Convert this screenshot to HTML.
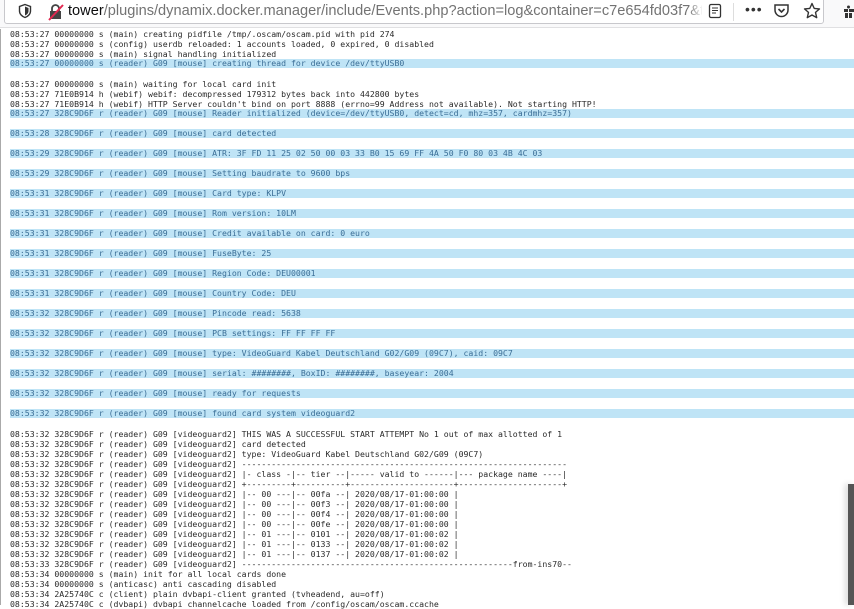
<!DOCTYPE html>
<html><head><meta charset="utf-8"><style>
*{margin:0;padding:0;box-sizing:border-box}
body{width:854px;height:605px;overflow:hidden;background:#fff;position:relative;font-family:"Liberation Sans",sans-serif}
#tb{position:absolute;left:0;top:0;width:854px;height:28px;background:#f9f9fa;border-bottom:1px solid #e0e0e2}
#url{position:absolute;left:4px;top:-1px;width:820px;height:25px;background:#fff;border:1px solid #c8c8cc;border-radius:0 0 3px 3px}
#ut{position:absolute;left:63px;top:3px;width:634px;overflow:hidden;font-size:14.6px;color:#737373;white-space:nowrap}
#ut b{font-weight:normal;color:#0c0c0d}
#log{position:absolute;left:10px;top:29px;right:0;font-family:"DejaVu Sans Mono","Liberation Mono",monospace;font-size:8.2px;line-height:10px;color:#2a2a2a;white-space:pre}
#log div{height:10px}
#log .h{background:#bfe4f6;color:#3b6e96;height:9px;line-height:9px;margin-bottom:1px}
#lb{position:absolute;left:0;top:29px;width:1px;height:576px;background:#aaa}
</style></head><body>
<div id="tb">
 <div id="url">
  <svg style="position:absolute;left:12px;top:3px" width="16" height="16" viewBox="0 0 16 16"><path d="M8 1.5 L13.5 3.5 V8 C13.5 11 11 13.5 8 14.5 C5 13.5 2.5 11 2.5 8 V3.5 Z" fill="none" stroke="#333" stroke-width="1.4"/><path d="M8 3.5 L11.5 5 V8 C11.5 10 10 11.8 8 12.5 Z" fill="#333"/></svg>
  <svg style="position:absolute;left:42px;top:3px" width="18" height="18" viewBox="0 0 18 18"><rect x="3" y="8" width="11" height="8" fill="#444"/><path d="M5 8 V5.5 A3.5 3.5 0 0 1 12 5.5 V8" fill="none" stroke="#444" stroke-width="1.8"/><path d="M2 17 L16 2" stroke="#e22850" stroke-width="2"/></svg>
  <div id="ut"><b>tower</b>/plugins/dynamix.docker.manager/include/Events.php?action=log&amp;container=c7e654fd03f7&amp;title=</div>
  <div style="position:absolute;left:684px;top:0;width:14px;height:22px;background:linear-gradient(90deg,rgba(255,255,255,0),#fff)"></div>
  <svg style="position:absolute;left:703px;top:3px" width="14" height="16" viewBox="0 0 14 16"><rect x="1.5" y="1.5" width="11" height="13" rx="1.5" fill="none" stroke="#333" stroke-width="1.3"/><path d="M4 5h6M4 7.5h6M4 10h4" stroke="#333" stroke-width="1.1"/></svg>
  <div style="position:absolute;left:728px;top:3px;width:1px;height:18px;background:#ddd"></div>
  <div style="position:absolute;left:740px;top:1px;font-size:14px;color:#333;letter-spacing:1px">•••</div>
  <svg style="position:absolute;left:768px;top:3px" width="17" height="16" viewBox="0 0 17 16"><path d="M2 2 H15 V7 A6.5 6.5 0 0 1 2 7 Z" fill="none" stroke="#333" stroke-width="1.5"/><path d="M5.5 6 L8.5 9 L11.5 6" fill="none" stroke="#333" stroke-width="1.6"/></svg>
  <svg style="position:absolute;left:798px;top:2px" width="18" height="18" viewBox="0 0 18 18"><path d="M9 1.5 L11.2 6.4 L16.5 6.9 L12.5 10.4 L13.7 15.7 L9 13 L4.3 15.7 L5.5 10.4 L1.5 6.9 L6.8 6.4 Z" fill="none" stroke="#333" stroke-width="1.4" stroke-linejoin="round"/></svg>
 </div>
 <svg style="position:absolute;left:843px;top:5px" width="11" height="14" viewBox="0 0 11 14"><rect x="1" y="4" width="10" height="3" fill="#333"/><rect x="2" y="8" width="3" height="5" fill="#333"/><rect x="6" y="8" width="3" height="5" fill="#333"/><rect x="5" y="3" width="1" height="10" fill="#fff"/><circle cx="5.5" cy="2" r="1.5" fill="#333"/></svg>
</div>
<div id="lb"></div>
<div id="log"><div>08:53:27 00000000 s (main) creating pidfile /tmp/.oscam/oscam.pid with pid 274</div><div>08:53:27 00000000 s (config) userdb reloaded: 1 accounts loaded, 0 expired, 0 disabled</div><div>08:53:27 00000000 s (main) signal handling initialized</div><div class="h">08:53:27 00000000 s (reader) G09 [mouse] creating thread for device /dev/ttyUSB0</div><div></div><div>08:53:27 00000000 s (main) waiting for local card init</div><div>08:53:27 71E0B914 h (webif) webif: decompressed 179312 bytes back into 442800 bytes</div><div>08:53:27 71E0B914 h (webif) HTTP Server couldn't bind on port 8888 (errno=99 Address not available). Not starting HTTP!</div><div class="h">08:53:27 328C9D6F r (reader) G09 [mouse] Reader initialized (device=/dev/ttyUSB0, detect=cd, mhz=357, cardmhz=357)</div><div></div><div class="h">08:53:28 328C9D6F r (reader) G09 [mouse] card detected</div><div></div><div class="h">08:53:29 328C9D6F r (reader) G09 [mouse] ATR: 3F FD 11 25 02 50 00 03 33 B0 15 69 FF 4A 50 F0 80 03 4B 4C 03</div><div></div><div class="h">08:53:29 328C9D6F r (reader) G09 [mouse] Setting baudrate to 9600 bps</div><div></div><div class="h">08:53:31 328C9D6F r (reader) G09 [mouse] Card type: KLPV</div><div></div><div class="h">08:53:31 328C9D6F r (reader) G09 [mouse] Rom version: 10LM</div><div></div><div class="h">08:53:31 328C9D6F r (reader) G09 [mouse] Credit available on card: 0 euro</div><div></div><div class="h">08:53:31 328C9D6F r (reader) G09 [mouse] FuseByte: 25</div><div></div><div class="h">08:53:31 328C9D6F r (reader) G09 [mouse] Region Code: DEU00001</div><div></div><div class="h">08:53:31 328C9D6F r (reader) G09 [mouse] Country Code: DEU</div><div></div><div class="h">08:53:32 328C9D6F r (reader) G09 [mouse] Pincode read: 5638</div><div></div><div class="h">08:53:32 328C9D6F r (reader) G09 [mouse] PCB settings: FF FF FF FF</div><div></div><div class="h">08:53:32 328C9D6F r (reader) G09 [mouse] type: VideoGuard Kabel Deutschland G02/G09 (09C7), caid: 09C7</div><div></div><div class="h">08:53:32 328C9D6F r (reader) G09 [mouse] serial: ########, BoxID: ########, baseyear: 2004</div><div></div><div class="h">08:53:32 328C9D6F r (reader) G09 [mouse] ready for requests</div><div></div><div class="h">08:53:32 328C9D6F r (reader) G09 [mouse] found card system videoguard2</div><div></div><div>08:53:32 328C9D6F r (reader) G09 [videoguard2] THIS WAS A SUCCESSFUL START ATTEMPT No 1 out of max allotted of 1</div><div>08:53:32 328C9D6F r (reader) G09 [videoguard2] card detected</div><div>08:53:32 328C9D6F r (reader) G09 [videoguard2] type: VideoGuard Kabel Deutschland G02/G09 (09C7)</div><div>08:53:32 328C9D6F r (reader) G09 [videoguard2] ------------------------------------------------------------------</div><div>08:53:32 328C9D6F r (reader) G09 [videoguard2] |- class -|-- tier --|----- valid to ------|--- package name ----|</div><div>08:53:32 328C9D6F r (reader) G09 [videoguard2] +---------+----------+---------------------+---------------------+</div><div>08:53:32 328C9D6F r (reader) G09 [videoguard2] |-- 00 ---|-- 00fa --| 2020/08/17-01:00:00 |</div><div>08:53:32 328C9D6F r (reader) G09 [videoguard2] |-- 00 ---|-- 00f3 --| 2020/08/17-01:00:00 |</div><div>08:53:32 328C9D6F r (reader) G09 [videoguard2] |-- 00 ---|-- 00f4 --| 2020/08/17-01:00:00 |</div><div>08:53:32 328C9D6F r (reader) G09 [videoguard2] |-- 00 ---|-- 00fe --| 2020/08/17-01:00:00 |</div><div>08:53:32 328C9D6F r (reader) G09 [videoguard2] |-- 01 ---|-- 0101 --| 2020/08/17-01:00:02 |</div><div>08:53:32 328C9D6F r (reader) G09 [videoguard2] |-- 01 ---|-- 0133 --| 2020/08/17-01:00:02 |</div><div>08:53:32 328C9D6F r (reader) G09 [videoguard2] |-- 01 ---|-- 0137 --| 2020/08/17-01:00:02 |</div><div>08:53:33 328C9D6F r (reader) G09 [videoguard2] -------------------------------------------------------from-ins70--</div><div>08:53:34 00000000 s (main) init for all local cards done</div><div>08:53:34 00000000 s (anticasc) anti cascading disabled</div><div>08:53:34 2A25740C c (client) plain dvbapi-client granted (tvheadend, au=off)</div><div>08:53:34 2A25740C c (dvbapi) dvbapi channelcache loaded from /config/oscam/oscam.ccache</div></div>
<div style="position:absolute;left:848px;top:484px;width:6px;height:121px;background:#555;box-shadow:-3px 0 6px rgba(0,0,0,0.15)"></div>
</body></html>
